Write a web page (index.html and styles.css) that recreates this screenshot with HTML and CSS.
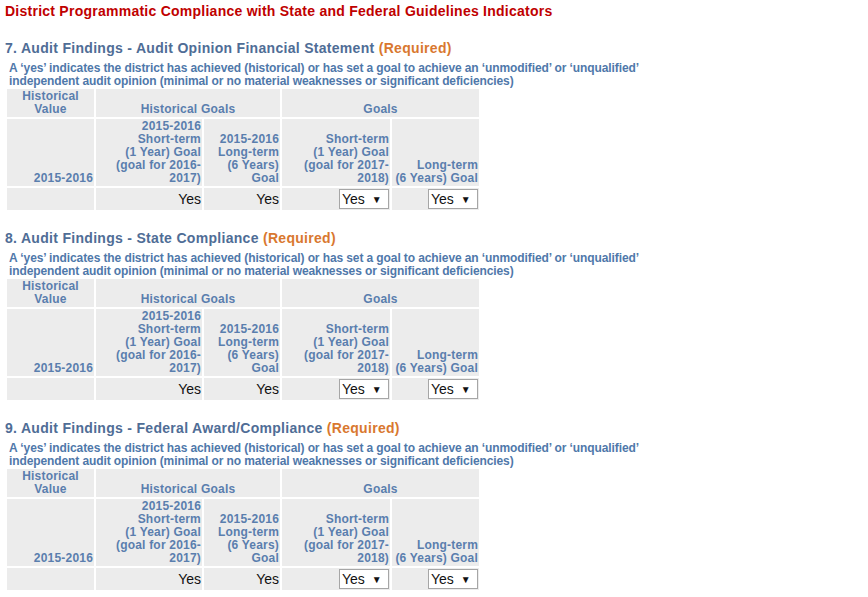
FILE: index.html
```html
<!DOCTYPE html>
<html>
<head>
    <title>District Programmatic Compliance</title>
    <link rel="stylesheet" href="styles.css">
</head>
<body>
    <h1 class="page-title">District Programmatic Compliance with State and Federal Guidelines Indicators</h1>

    <div class="indicator">
        <h2 class="indicator-title">7. Audit Findings - Audit Opinion Financial Statement <span class="req">(Required)</span></h2>
        <p class="indicator-note">A ‘yes’ indicates the district has achieved (historical) or has set a goal to achieve an ‘unmodified’ or ‘unqualified’ independent audit opinion (minimal or no material weaknesses or significant deficiencies)</p>
        <table class="goals">
            <colgroup><col class="c1"><col class="c2"><col class="c3"><col class="c4"><col class="c5"></colgroup>
            <tr class="head">
                <th>Historical<br>Value</th>
                <th colspan="2">Historical Goals</th>
                <th colspan="2">Goals</th>
            </tr>
            <tr class="sub">
                <th>2015-2016</th>
                <th>2015-2016<br>Short-term<br>(1 Year) Goal<br>(goal for 2016-<br>2017)</th>
                <th>2015-2016<br>Long-term<br>(6 Years)<br>Goal</th>
                <th>Short-term<br>(1 Year) Goal<br>(goal for 2017-<br>2018)</th>
                <th>Long-term<br>(6 Years) Goal</th>
            </tr>
            <tr class="vals">
                <td></td>
                <td>Yes</td>
                <td>Yes</td>
                <td><span class="pick">Yes <span class="arrow">▼</span></span></td>
                <td><span class="pick">Yes <span class="arrow">▼</span></span></td>
            </tr>
        </table>
    </div>

    <div class="indicator">
        <h2 class="indicator-title">8. Audit Findings - State Compliance <span class="req">(Required)</span></h2>
        <p class="indicator-note">A ‘yes’ indicates the district has achieved (historical) or has set a goal to achieve an ‘unmodified’ or ‘unqualified’ independent audit opinion (minimal or no material weaknesses or significant deficiencies)</p>
        <table class="goals">
            <colgroup><col class="c1"><col class="c2"><col class="c3"><col class="c4"><col class="c5"></colgroup>
            <tr class="head">
                <th>Historical<br>Value</th>
                <th colspan="2">Historical Goals</th>
                <th colspan="2">Goals</th>
            </tr>
            <tr class="sub">
                <th>2015-2016</th>
                <th>2015-2016<br>Short-term<br>(1 Year) Goal<br>(goal for 2016-<br>2017)</th>
                <th>2015-2016<br>Long-term<br>(6 Years)<br>Goal</th>
                <th>Short-term<br>(1 Year) Goal<br>(goal for 2017-<br>2018)</th>
                <th>Long-term<br>(6 Years) Goal</th>
            </tr>
            <tr class="vals">
                <td></td>
                <td>Yes</td>
                <td>Yes</td>
                <td><span class="pick">Yes <span class="arrow">▼</span></span></td>
                <td><span class="pick">Yes <span class="arrow">▼</span></span></td>
            </tr>
        </table>
    </div>

    <div class="indicator">
        <h2 class="indicator-title">9. Audit Findings - Federal Award/Compliance <span class="req">(Required)</span></h2>
        <p class="indicator-note">A ‘yes’ indicates the district has achieved (historical) or has set a goal to achieve an ‘unmodified’ or ‘unqualified’ independent audit opinion (minimal or no material weaknesses or significant deficiencies)</p>
        <table class="goals">
            <colgroup><col class="c1"><col class="c2"><col class="c3"><col class="c4"><col class="c5"></colgroup>
            <tr class="head">
                <th>Historical<br>Value</th>
                <th colspan="2">Historical Goals</th>
                <th colspan="2">Goals</th>
            </tr>
            <tr class="sub">
                <th>2015-2016</th>
                <th>2015-2016<br>Short-term<br>(1 Year) Goal<br>(goal for 2016-<br>2017)</th>
                <th>2015-2016<br>Long-term<br>(6 Years)<br>Goal</th>
                <th>Short-term<br>(1 Year) Goal<br>(goal for 2017-<br>2018)</th>
                <th>Long-term<br>(6 Years) Goal</th>
            </tr>
            <tr class="vals">
                <td></td>
                <td>Yes</td>
                <td>Yes</td>
                <td><span class="pick">Yes <span class="arrow">▼</span></span></td>
                <td><span class="pick">Yes <span class="arrow">▼</span></span></td>
            </tr>
        </table>
    </div>
</body>
</html>
```

FILE: styles.css
```css
body { font-family: "Liberation Sans", Arial, sans-serif; margin: 3px 5px; background: #fff; }
.page-title { margin: 0; font-size: 14px; line-height: 16px; letter-spacing: 0.25px; color: #c00000; }
.indicator { margin-top: 21px; }
.indicator + .indicator { margin-top: 18px; }
.indicator-title { margin: 0 0 6px; font-size: 14px; line-height: 16px; letter-spacing: 0.3px; color: #4f6d96; }
.req { color: #d9782f; }
.indicator-note { margin: 0 0 -1px; padding-left: 4px; max-width: 645px; font-size: 12px; line-height: 13px; letter-spacing: -0.1px; font-weight: bold; color: #4f78aa; }
.goals { border-collapse: separate; border-spacing: 2px; table-layout: fixed; width: 476px; }
.goals .c1 { width: 87px; }
.goals .c2 { width: 106px; }
.goals .c3 { width: 76px; }
.goals .c4 { width: 108px; }
.goals .c5 { width: 87px; }
.goals th, .goals td { background: #ececec; padding: 1px; font-size: 12px; line-height: 13px; }
.goals th { color: #5a7eae; font-weight: bold; letter-spacing: 0.2px; vertical-align: bottom; }
.head th { text-align: center; }
.sub th { text-align: right; }
.vals td { text-align: right; font-size: 14px; line-height: 19px; color: #111; height: 20px; vertical-align: middle; }
.pick { display: inline-block; width: 46px; height: 18px; padding-left: 2px; border: 1px solid #a6a6a6; background: #fff; text-align: left; font-size: 14px; line-height: 18px; }
.arrow { font-size: 10px; vertical-align: 1px; margin-left: 3px; }
```
